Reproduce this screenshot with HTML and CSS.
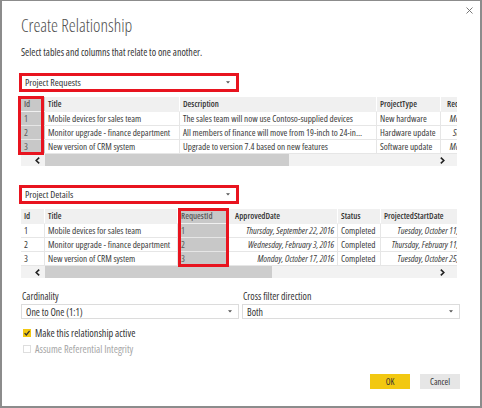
FILE: index.html
```html
<!DOCTYPE html>
<html lang="en">
<head>
<meta charset="utf-8">
<title>Create Relationship</title>
<link rel="stylesheet" href="styles.css">
</head>
<body>
<div class="dialog">
  <button class="close" aria-label="Close">
    <svg width="7" height="7" viewBox="0 0 7 7"><path d="M0.5 0.5L6.5 6.5M6.5 0.5L0.5 6.5" stroke="#6a6a6a" stroke-width="0.9" fill="none"/></svg>
  </button>
  <h1 class="title">Create Relationship</h1>
  <p class="subtitle">Select tables and columns that relate to one another.</p>

  <section class="block">
    <div class="picker"><span>Project Requests</span><svg class="caret" width="4" height="3" viewBox="0 0 4 3"><polygon points="0,0.3 4,0.3 2,2.6" fill="#555"/></svg></div>
    <div class="grid-wrap">
      <div class="grid-view">
        <div class="row head cols-a">
          <div class="cell hl">Id</div><div class="cell">Title</div><div class="cell">Description</div><div class="cell">ProjectType</div><div class="cell date-head">RequestDate</div>
        </div>
        <div class="row cols-a">
          <div class="cell hl">1</div><div class="cell">Mobile devices for sales team</div><div class="cell">The sales team will now use Contoso-supplied devices</div><div class="cell">New hardware</div><div class="cell date">Monday, September 12, 2016</div>
        </div>
        <div class="row cols-a">
          <div class="cell hl">2</div><div class="cell">Monitor upgrade - finance department</div><div class="cell">All members of finance will move from 19-inch to 24-in...</div><div class="cell">Hardware update</div><div class="cell date">Saturday, February 20, 2016</div>
        </div>
        <div class="row cols-a">
          <div class="cell hl">3</div><div class="cell">New version of CRM system</div><div class="cell">Upgrade to version 7.4 based on new features</div><div class="cell">Software update</div><div class="cell date">Monday, September 26, 2016</div>
        </div>
        <div class="hscroll">
          <div class="sb-btn sb-left"><svg width="5" height="7" viewBox="0 0 5 7"><polyline points="4.2,0.6 1.2,3.5 4.2,6.4" fill="none" stroke="#222" stroke-width="1.6"/></svg></div>
          <div class="sb-thumb thumb-a"></div>
          <div class="sb-track"></div>
          <div class="sb-btn sb-right"><svg width="5" height="7" viewBox="0 0 5 7"><polyline points="0.8,0.6 3.8,3.5 0.8,6.4" fill="none" stroke="#222" stroke-width="1.6"/></svg></div>
        </div>
      </div>
      <div class="flag flag-id"></div>
    </div>
  </section>

  <section class="block block-second">
    <div class="picker"><span>Project Details</span><svg class="caret" width="4" height="3" viewBox="0 0 4 3"><polygon points="0,0.3 4,0.3 2,2.6" fill="#555"/></svg></div>
    <div class="grid-wrap">
      <div class="grid-view">
        <div class="row head cols-b">
          <div class="cell">Id</div><div class="cell">Title</div><div class="cell hl">RequestId</div><div class="cell date-head">ApprovedDate</div><div class="cell">Status</div><div class="cell">ProjectedStartDate</div>
        </div>
        <div class="row cols-b">
          <div class="cell">1</div><div class="cell">Mobile devices for sales team</div><div class="cell hl">1</div><div class="cell date">Thursday, September 22, 2016</div><div class="cell">Completed</div><div class="cell date">Tuesday, October 11, 2016</div>
        </div>
        <div class="row cols-b">
          <div class="cell">2</div><div class="cell">Monitor upgrade - finance department</div><div class="cell hl">2</div><div class="cell date">Wednesday, February 3, 2016</div><div class="cell">Completed</div><div class="cell date">Thursday, February 11, 2016</div>
        </div>
        <div class="row cols-b">
          <div class="cell">3</div><div class="cell">New version of CRM system</div><div class="cell hl">3</div><div class="cell date">Monday, October 17, 2016</div><div class="cell">Completed</div><div class="cell date">Tuesday, October 25, 2016</div>
        </div>
        <div class="hscroll">
          <div class="sb-btn sb-left"><svg width="5" height="7" viewBox="0 0 5 7"><polyline points="4.2,0.6 1.2,3.5 4.2,6.4" fill="none" stroke="#222" stroke-width="1.6"/></svg></div>
          <div class="sb-thumb thumb-b"></div>
          <div class="sb-track"></div>
          <div class="sb-btn sb-right"><svg width="5" height="7" viewBox="0 0 5 7"><polyline points="0.8,0.6 3.8,3.5 0.8,6.4" fill="none" stroke="#222" stroke-width="1.6"/></svg></div>
        </div>
      </div>
      <div class="flag flag-req"></div>
    </div>
  </section>

  <section class="options">
    <div class="field">
      <label class="field-label">Cardinality</label>
      <div class="select"><span>One to One (1:1)</span><svg class="caret" width="4" height="3" viewBox="0 0 4 3"><polygon points="0,0.3 4,0.3 2,2.6" fill="#555"/></svg></div>
    </div>
    <div class="field">
      <label class="field-label">Cross filter direction</label>
      <div class="select"><span>Both</span><svg class="caret" width="4" height="3" viewBox="0 0 4 3"><polygon points="0,0.3 4,0.3 2,2.6" fill="#555"/></svg></div>
    </div>
  </section>

  <div class="check check-first">
    <span class="box box-on"><svg width="8" height="8" viewBox="0 0 8 8"><path d="M1.6 4.1L3.3 5.9L6.6 1.9" fill="none" stroke="#333" stroke-width="1.3"/></svg></span>
    <span>Make this relationship active</span>
  </div>
  <div class="check check-disabled">
    <span class="box box-off"></span>
    <span>Assume Referential Integrity</span>
  </div>

  <div class="actions">
    <button class="btn btn-primary">OK</button>
    <button class="btn btn-secondary">Cancel</button>
  </div>
</div>
</body>
</html>
```

FILE: styles.css
```css
* { box-sizing: border-box; }

html, body {
  margin: 0;
  padding: 0;
  background: #ffffff;
}

body {
  width: 482px;
  height: 408px;
  font-family: "Open Sans", "Liberation Sans", sans-serif;
  font-stretch: 85%;
  color: #333333;
}

.dialog {
  position: relative;
  width: 482px;
  height: 408px;
  border: 2px solid #8c8c8c;
  border-top-width: 1px;
  padding: 13px 20px 0 19px;
  display: flex;
  flex-direction: column;
  background: #ffffff;
}

.close {
  position: absolute;
  top: 6px;
  right: 7px;
  width: 7px;
  height: 7px;
  padding: 0;
  border: 0;
  background: none;
  display: flex;
}

.title {
  margin: 0;
  font-size: 17.6px;
  line-height: 22px;
  font-weight: 300;
  color: #505050;
}

.subtitle {
  margin: 10px 0 0;
  font-size: 10px;
  line-height: 13px;
  color: #333333;
}

.block { margin-top: 14px; }
.block-second { margin-top: 19px; }

.picker {
  width: 220px;
  height: 19px;
  margin-left: -2px;
  border: 3px solid #e8141f;
  background: #ffffff;
  display: flex;
  align-items: center;
  justify-content: space-between;
  padding: 0 6px 0 3px;
  font-size: 9.8px;
  color: #333333;
}

.caret { display: block; }

.grid-wrap {
  position: relative;
  margin-top: 5px;
  width: 436px;
}

.grid-view {
  width: 436px;
  overflow: hidden;
}

.row {
  display: grid;
  width: max-content;
  height: 14px;
  border-bottom: 1px solid #e6e6e6;
  font-size: 9.2px;
  line-height: 13px;
  color: #3a3a3a;
  background: #ffffff;
}

.row.head {
  height: 15px;
  line-height: 14px;
  background: #f0f0f0;
  font-weight: 600;
  font-size: 8.6px;
  color: #333333;
  border-bottom-color: #f0f0f0;
}

.cols-a { grid-template-columns: 24px 135px 197px 64px 98px; }
.cols-b { grid-template-columns: 24px 133px 51px 109px 43px 97px; }

.cell {
  padding: 0 3px;
  white-space: nowrap;
  overflow: hidden;
  border-right: 1px solid #e6e6e6;
}

.head .cell { border-right-color: #ffffff; }

.cell.date {
  font-style: italic;
  text-align: right;
}

.cell.date-head { padding-left: 6px; }

.cell.hl {
  background: #c8c8c8;
  color: #5a5a5a;
  border-right-color: #c8c8c8;
}

.hscroll {
  display: flex;
  height: 12px;
  background: #f2f2f2;
}

.sb-btn {
  width: 24px;
  display: flex;
  align-items: center;
}

.sb-left { padding-left: 14px; }
.sb-right { padding-left: 7px; }

.sb-thumb { background: #cdcdcd; }
.thumb-a { width: 244px; }
.thumb-b { width: 227px; }

.sb-track { flex: 1; }

.flag {
  position: absolute;
  top: -1px;
  height: 59px;
  border: 3px solid #e8141f;
}

.flag-id { left: -3px; width: 26px; }
.flag-req { left: 157px; width: 51px; }

.options {
  margin-top: 12px;
  display: grid;
  grid-template-columns: 1fr 1fr;
  column-gap: 3px;
}

.field-label {
  display: block;
  padding-left: 1px;
  font-size: 9.9px;
  line-height: 12px;
  color: #333333;
}

.select {
  margin-top: 2px;
  height: 15px;
  border: 1px solid #dcdcdc;
  display: flex;
  align-items: center;
  justify-content: space-between;
  padding: 0 6px 0 4px;
  font-size: 9.9px;
  color: #333333;
}

.check {
  display: flex;
  align-items: center;
  gap: 4px;
  height: 12px;
  padding-left: 2px;
  font-size: 10.2px;
  color: #333333;
}

.check-first { margin-top: 8px; }
.check-disabled { margin-top: 4px; color: #a6a6a6; }

.box {
  width: 8px;
  height: 8px;
  display: flex;
}

.box-on { background: #f2c811; }
.box-off { border: 1px solid #dedede; background: #ffffff; }

.actions {
  margin-top: 19px;
  display: flex;
  justify-content: flex-end;
  gap: 10px;
}

.btn {
  width: 40px;
  height: 15px;
  padding: 0;
  border: 0;
  font-family: inherit;
  font-stretch: inherit;
  font-size: 8.8px;
  color: #333333;
}

.btn-primary { background: #f2c811; }
.btn-secondary { background: #e6e6e6; }
```
